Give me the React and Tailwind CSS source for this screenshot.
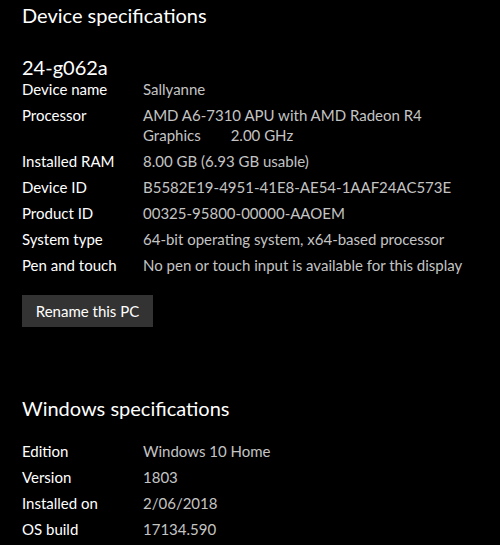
const device = [
  ["Device name", "Sallyanne"],
  [
    "Processor",
    <>
      AMD A6-7310 APU with AMD Radeon R4
      <br />
      Graphics<span className="ml-[30px]">2.00 GHz</span>
    </>,
  ],
  ["Installed RAM", "8.00 GB (6.93 GB usable)"],
  ["Device ID", "B5582E19-4951-41E8-AE54-1AAF24AC573E"],
  ["Product ID", "00325-95800-00000-AAOEM"],
  ["System type", "64-bit operating system, x64-based processor"],
  ["Pen and touch", "No pen or touch input is available for this display"],
];

const windows = [
  ["Edition", "Windows 10 Home"],
  ["Version", "1803"],
  ["Installed on", "2/06/2018"],
  ["OS build", "17134.590"],
];

const Row = ({ label, value }) => (
  <div className="flex">
    <div className="w-[121px] shrink-0 text-white">{label}</div>
    <div className="whitespace-nowrap text-[#c4c4c4]">{value}</div>
  </div>
);

export default function App() {
  return (
    <div
      className="w-[500px] h-[545px] overflow-hidden bg-black pl-[22px] text-[15px] leading-[20px]"
      style={{ fontFamily: 'Lato, "Noto Sans", sans-serif' }}
    >
      <h1 className="pt-[2px] text-[20px] leading-[26px] text-white">Device specifications</h1>

      <div className="mt-[27px] text-[20px] leading-[24px] text-white">24-g062a</div>

      <div className="flex flex-col gap-[6px]">
        {device.map(([l, v]) => (
          <Row key={l} label={l} value={v} />
        ))}
      </div>

      <button className="mt-[20px] h-[32px] w-[131px] bg-[#333333] text-white">Rename this PC</button>

      <h2 className="mt-[68px] text-[20px] leading-[26px] text-white">Windows specifications</h2>

      <div className="mt-[20px] flex flex-col gap-[6px]">
        {windows.map(([l, v]) => (
          <Row key={l} label={l} value={v} />
        ))}
      </div>
    </div>
  );
}
